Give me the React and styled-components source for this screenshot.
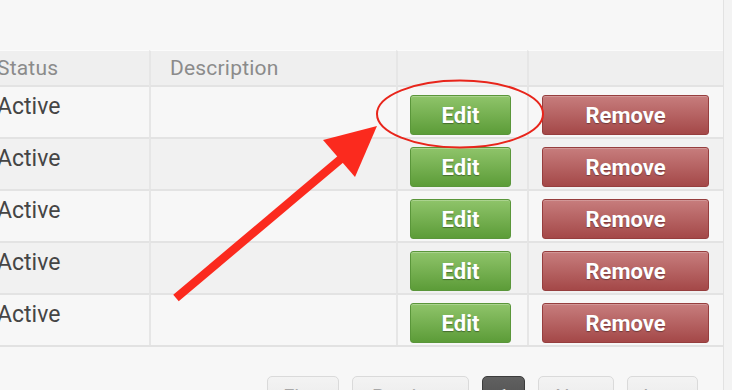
import React from "react";
import styled, { createGlobalStyle } from "styled-components";

const Global = createGlobalStyle`
  html, body { margin: 0; padding: 0; background: #f2f2f2; }
  body { font-family: Roboto, "Liberation Sans", Arial, sans-serif; }
  * { box-sizing: border-box; }
`;

const Frame = styled.div`
  position: relative;
  width: 732px;
  height: 390px;
  overflow: hidden;
  background: #f3f3f3;
`;

const Panel = styled.div`
  width: 724px;
  height: 390px;
  overflow: hidden;
  background: #f7f7f7;
  border-right: 1px solid #e2e2e2;
  display: flex;
  flex-direction: column;
`;

const TopSpace = styled.div`
  height: 50px;
  flex: none;
`;

const Table = styled.div`
  margin-left: -24px;
  width: 747px;
  display: grid;
  grid-template-columns: 173px 247px 131px 196px;
  border-bottom: 2px solid #e2e2e2;
`;

const HeadCell = styled.div`
  height: 37px;
  background: #efefef;
  border-top: 1px solid #fbfbfb;
  border-bottom: 2px solid #e3e3e3;
  border-left: ${(p) => (p.$first ? "none" : "2px solid #e6e6e6")};
  padding-left: ${(p) => (p.$first ? "21px" : "19px")};
  display: flex;
  align-items: center;
  font-size: 21px;
  color: #8b8b8b;
  letter-spacing: 0.2px;
`;

const Cell = styled.div`
  height: ${(p) => (p.$first ? "50px" : "52px")};
  background: ${(p) => (p.$alt ? "#f1f1f1" : "#f7f7f7")};
  border-top: ${(p) => (p.$first ? "none" : "2px solid #e3e3e3")};
  border-left: ${(p) => (p.$col === 0 ? "none" : "2px solid #e6e6e6")};
  padding: ${(p) => p.$pad};
  display: flex;
  align-items: flex-start;
  justify-content: center;
  font-size: 23px;
  color: #454545;
`;

const TextCell = styled(Cell)`
  justify-content: flex-start;
`;

const ActionButton = styled.button`
  width: 100%;
  height: 40px;
  border-radius: 3px;
  font-family: Roboto, "Liberation Sans", Arial, sans-serif;
  font-weight: 700;
  font-size: 22px;
  color: #ffffff;
  text-shadow: 0 1px 1px rgba(0, 0, 0, 0.35);
  cursor: pointer;
  padding: 0;
  ${(p) =>
    p.$variant === "danger"
      ? `
    background: linear-gradient(#c77d7d, #a44848);
    border: 1px solid #963e3e;
    box-shadow: inset 0 1px 0 rgba(255,255,255,0.2);
  `
      : `
    background: linear-gradient(#8fc46a, #5c9c38);
    border: 1px solid #5a963a;
    box-shadow: inset 0 1px 0 rgba(255,255,255,0.25);
  `}
`;

const Pager = styled.div`
  margin-top: 29px;
  display: flex;
  justify-content: flex-end;
  gap: 13px;
  padding-right: 25px;
`;

const PageButton = styled.div`
  width: ${(p) => p.$w}px;
  height: 40px;
  flex: none;
  border-radius: 5px;
  padding-top: 8px;
  text-align: center;
  font-size: 20px;
  ${(p) =>
    p.$active
      ? `
    background: linear-gradient(#606060, #4c4c4c);
    border: 1px solid #3c3c3c;
    color: #f4f4f4;
  `
      : `
    background: linear-gradient(#f3f3f3, #e8e8e8);
    border: 1px solid #dadada;
    color: #a8a8a8;
  `}
`;

const Overlay = styled.svg`
  position: absolute;
  left: 0;
  top: 0;
  pointer-events: none;
`;

const rows = [0, 1, 2, 3, 4];
const pages = [
  { label: "First", w: 72 },
  { label: "Previous", w: 117 },
  { label: "1", w: 43, active: true },
  { label: "Next", w: 76 },
  { label: "Last", w: 71 },
];

export default function App() {
  return (
    <>
      <Global />
      <Frame>
        <Panel>
          <TopSpace />
          <Table>
            <HeadCell $first>Status</HeadCell>
            <HeadCell>Description</HeadCell>
            <HeadCell />
            <HeadCell />
            {rows.map((r) => (
              <React.Fragment key={r}>
                <TextCell $col={0} $first={r === 0} $alt={r % 2 === 1} $pad="6px 0 0 21px">
                  Active
                </TextCell>
                <TextCell $col={1} $first={r === 0} $alt={r % 2 === 1} $pad="0" />
                <Cell $col={2} $first={r === 0} $alt={r % 2 === 1} $pad="8px 16px 0 12px">
                  <ActionButton>Edit</ActionButton>
                </Cell>
                <Cell $col={3} $first={r === 0} $alt={r % 2 === 1} $pad="8px 14px 0 13px">
                  <ActionButton $variant="danger">Remove</ActionButton>
                </Cell>
              </React.Fragment>
            ))}
          </Table>
          <Pager>
            {pages.map((p) => (
              <PageButton key={p.label} $w={p.w} $active={p.active}>
                {p.label}
              </PageButton>
            ))}
          </Pager>
        </Panel>
        <Overlay width="732" height="390" viewBox="0 0 732 390">
          <ellipse cx="460" cy="114" rx="83" ry="33.5" fill="none" stroke="#e8251b" strokeWidth="2" />
          <line x1="176" y1="298" x2="342" y2="158" stroke="#fb2a1e" strokeWidth="8.5" />
          <polygon points="377,126 323,140 355,177" fill="#fb2a1e" />
        </Overlay>
      </Frame>
    </>
  );
}
